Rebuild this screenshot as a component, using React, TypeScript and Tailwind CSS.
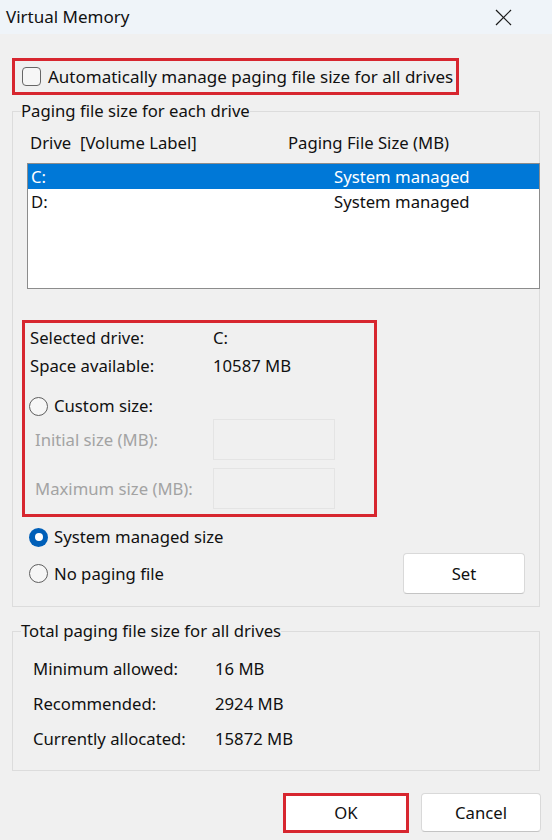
import React from 'react';

const Radio = ({ checked }: { checked?: boolean }) =>
    checked ? (
        <span className="w-[19px] h-[19px] shrink-0 rounded-full bg-[#005fb8] flex items-center justify-center">
            <span className="w-[8px] h-[8px] rounded-full bg-white" />
        </span>
    ) : (
        <span className="w-[19px] h-[19px] shrink-0 rounded-full border border-[#5f5f5f] bg-[#f6f6f6]" />
    );

const CloseIcon = () => (
    <svg width="17" height="17" viewBox="0 0 17 17" fill="none" stroke="#1a1a1a" strokeWidth="1.2">
        <line x1="1" y1="1" x2="16" y2="16" />
        <line x1="16" y1="1" x2="1" y2="16" />
    </svg>
);

export default function App() {
    const drives = [
        { name: 'C:', size: 'System managed', selected: true },
        { name: 'D:', size: 'System managed', selected: false },
    ];

    const totals = [
        { label: 'Minimum allowed:', value: '16 MB' },
        { label: 'Recommended:', value: '2924 MB' },
        { label: 'Currently allocated:', value: '15872 MB' },
    ];

    return (
        <div
            className="w-[552px] h-[840px] bg-[#f0f0f0] text-[#111] text-[16.7px] flex flex-col overflow-hidden"
            style={{ fontFamily: '"Noto Sans", "Open Sans", sans-serif' }}
        >
            {/* Title bar */}
            <div className="h-[34px] bg-[#eff4f9] flex items-center justify-between pl-[6px] pr-[40px]">
                <span className="text-[17px]">Virtual Memory</span>
                <CloseIcon />
            </div>

            {/* Auto manage checkbox */}
            <div className="mt-[24px] ml-[12px] w-[447px] h-[37px] border-[3px] border-[#d7262f] flex items-center pl-[7px]">
                <span className="w-[19px] h-[19px] rounded-[4px] border border-[#666] bg-[#f6f6f6]" />
                <span className="ml-[7px] text-[17px]">Automatically manage paging file size for all drives</span>
            </div>

            {/* Paging file size per drive */}
            <fieldset className="mt-[6px] mx-[12px] border border-[#dcdcdc] pb-[12px]">
                <legend className="ml-[8px] leading-[20px]">Paging file size for each drive</legend>

                <div className="mt-[10px] h-[24px] flex items-center pl-[17px]">
                    <span className="w-[258px]">Drive&nbsp;&nbsp;[Volume Label]</span>
                    <span>Paging File Size (MB)</span>
                </div>

                <div className="mt-[8px] ml-[14px] mr-[-1px] h-[126px] bg-white border border-[#8c8c8c]">
                    {drives.map((d) => (
                        <div
                            key={d.name}
                            className={`h-[25px] flex items-center pl-[3px] ${d.selected ? 'bg-[#0078d7] text-white' : ''}`}
                        >
                            <span className="w-[303px]">{d.name}</span>
                            <span>{d.size}</span>
                        </div>
                    ))}
                </div>

                <div className="mt-[31px] ml-[9px] w-[355px] h-[197px] border-[3px] border-[#d7262f] pl-[5px] flex flex-col">
                    <div className="mt-[2px] h-[26px] flex items-center">
                        <span className="w-[183px]">Selected drive:</span>
                        <span>C:</span>
                    </div>
                    <div className="mt-[2px] h-[26px] flex items-center">
                        <span className="w-[183px]">Space available:</span>
                        <span>10587 MB</span>
                    </div>
                    <div className="mt-[14px] h-[26px] flex items-center gap-[6px] ml-[-1px]">
                        <Radio />
                        <span>Custom size:</span>
                    </div>
                    <div className="h-[41px] flex items-center pl-[5px] text-[#a3a3a3]">
                        <span className="w-[178px]">Initial size (MB):</span>
                        <span className="w-[122px] h-[41px] border border-[#e4e4e4]" />
                    </div>
                    <div className="mt-[8px] h-[41px] flex items-center pl-[5px] text-[#a3a3a3]">
                        <span className="w-[178px]">Maximum size (MB):</span>
                        <span className="w-[122px] h-[41px] border border-[#e4e4e4]" />
                    </div>
                </div>

                <div className="mt-[7px] h-[26px] flex items-center gap-[6px] ml-[16px]">
                    <Radio checked />
                    <span>System managed size</span>
                </div>
                <div className="mt-[3px] h-[41px] flex items-center justify-between ml-[16px] mr-[14px]">
                    <div className="flex items-center gap-[6px]">
                        <Radio />
                        <span>No paging file</span>
                    </div>
                    <button className="w-[122px] h-[41px] bg-white border border-[#d9d9d9] border-b-[#c4c4c4] rounded-[4px]">
                        Set
                    </button>
                </div>
            </fieldset>

            {/* Totals */}
            <fieldset className="mt-[14px] mx-[12px] border border-[#dcdcdc] pb-[14px]">
                <legend className="ml-[8px] leading-[20px]">Total paging file size for all drives</legend>
                <div className="mt-[10px]">
                    {totals.map((t) => (
                        <div key={t.label} className="h-[35px] flex items-center pl-[20px]">
                            <span className="w-[182px]">{t.label}</span>
                            <span>{t.value}</span>
                        </div>
                    ))}
                </div>
            </fieldset>

            {/* Dialog buttons */}
            <div className="mt-[22px] flex justify-end items-start gap-[12px] pr-[11px]">
                <button className="w-[126px] h-[40px] bg-white border-[3px] border-[#d7262f]">OK</button>
                <button className="w-[120px] h-[39px] bg-white border border-[#d9d9d9] border-b-[#c4c4c4] rounded-[4px]">
                    Cancel
                </button>
            </div>
        </div>
    );
}
